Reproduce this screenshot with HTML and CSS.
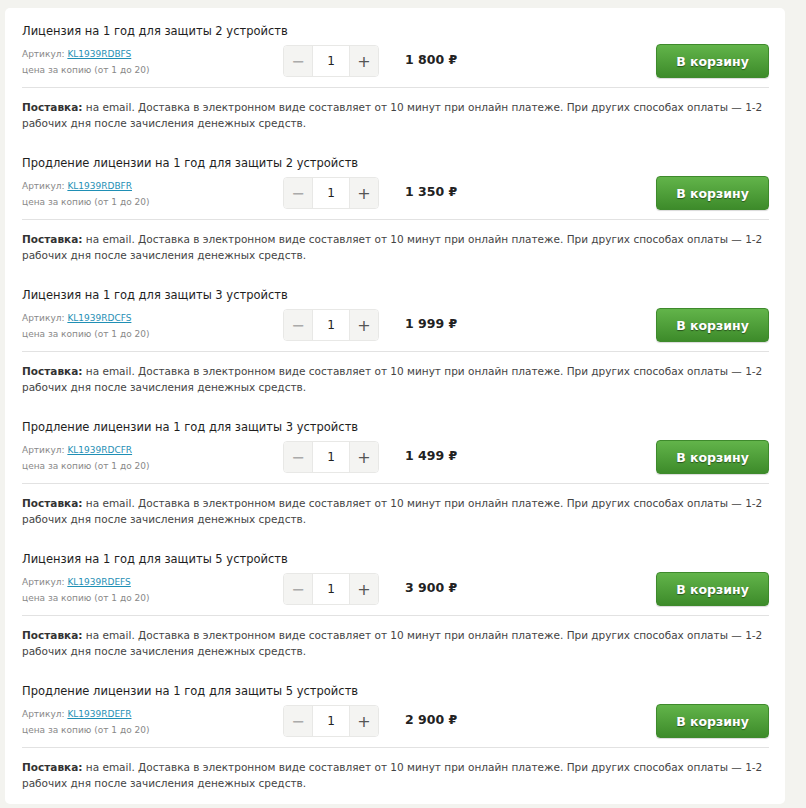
FILE: index.html
```html
<!DOCTYPE html>
<html lang="ru">
<head>
  <meta charset="UTF-8">
  <meta name="viewport" content="width=device-width, initial-scale=1.0">
  <title>Купить лицензию</title>
  <link rel="stylesheet" href="styles.css">
</head>
<body>

  <div class="offers">

    <!-- 2 устройства -->
    <div class="offer">
      <div class="offer-title">Лицензия на 1 год для защиты 2 устройств</div>
      <div class="offer-row">
        <div class="offer-info">
          <div class="sku">Артикул: <a href="#">KL1939RDBFS</a></div>
          <div class="per-copy">цена за копию (от 1 до 20)</div>
        </div>
        <div class="qty">
          <button class="qty-btn">&minus;</button>
          <input class="qty-input" type="text" value="1">
          <button class="qty-btn">+</button>
        </div>
        <div class="price">1 800 ₽</div>
        <button class="cart-btn">В корзину</button>
      </div>
      <p class="delivery"><b>Поставка:</b> на email. Доставка в электронном виде составляет от 10 минут при онлайн платеже. При других способах оплаты — 1-2 рабочих дня после зачисления денежных средств.</p>
    </div>

    <div class="offer">
      <div class="offer-title">Продление лицензии на 1 год для защиты 2 устройств</div>
      <div class="offer-row">
        <div class="offer-info">
          <div class="sku">Артикул: <a href="#">KL1939RDBFR</a></div>
          <div class="per-copy">цена за копию (от 1 до 20)</div>
        </div>
        <div class="qty">
          <button class="qty-btn">&minus;</button>
          <input class="qty-input" type="text" value="1">
          <button class="qty-btn">+</button>
        </div>
        <div class="price">1 350 ₽</div>
        <button class="cart-btn">В корзину</button>
      </div>
      <p class="delivery"><b>Поставка:</b> на email. Доставка в электронном виде составляет от 10 минут при онлайн платеже. При других способах оплаты — 1-2 рабочих дня после зачисления денежных средств.</p>
    </div>

    <!-- 3 устройства -->
    <div class="offer">
      <div class="offer-title">Лицензия на 1 год для защиты 3 устройств</div>
      <div class="offer-row">
        <div class="offer-info">
          <div class="sku">Артикул: <a href="#">KL1939RDCFS</a></div>
          <div class="per-copy">цена за копию (от 1 до 20)</div>
        </div>
        <div class="qty">
          <button class="qty-btn">&minus;</button>
          <input class="qty-input" type="text" value="1">
          <button class="qty-btn">+</button>
        </div>
        <div class="price">1 999 ₽</div>
        <button class="cart-btn">В корзину</button>
      </div>
      <p class="delivery"><b>Поставка:</b> на email. Доставка в электронном виде составляет от 10 минут при онлайн платеже. При других способах оплаты — 1-2 рабочих дня после зачисления денежных средств.</p>
    </div>

    <div class="offer">
      <div class="offer-title">Продление лицензии на 1 год для защиты 3 устройств</div>
      <div class="offer-row">
        <div class="offer-info">
          <div class="sku">Артикул: <a href="#">KL1939RDCFR</a></div>
          <div class="per-copy">цена за копию (от 1 до 20)</div>
        </div>
        <div class="qty">
          <button class="qty-btn">&minus;</button>
          <input class="qty-input" type="text" value="1">
          <button class="qty-btn">+</button>
        </div>
        <div class="price">1 499 ₽</div>
        <button class="cart-btn">В корзину</button>
      </div>
      <p class="delivery"><b>Поставка:</b> на email. Доставка в электронном виде составляет от 10 минут при онлайн платеже. При других способах оплаты — 1-2 рабочих дня после зачисления денежных средств.</p>
    </div>

    <!-- 5 устройств -->
    <div class="offer">
      <div class="offer-title">Лицензия на 1 год для защиты 5 устройств</div>
      <div class="offer-row">
        <div class="offer-info">
          <div class="sku">Артикул: <a href="#">KL1939RDEFS</a></div>
          <div class="per-copy">цена за копию (от 1 до 20)</div>
        </div>
        <div class="qty">
          <button class="qty-btn">&minus;</button>
          <input class="qty-input" type="text" value="1">
          <button class="qty-btn">+</button>
        </div>
        <div class="price">3 900 ₽</div>
        <button class="cart-btn">В корзину</button>
      </div>
      <p class="delivery"><b>Поставка:</b> на email. Доставка в электронном виде составляет от 10 минут при онлайн платеже. При других способах оплаты — 1-2 рабочих дня после зачисления денежных средств.</p>
    </div>

    <div class="offer">
      <div class="offer-title">Продление лицензии на 1 год для защиты 5 устройств</div>
      <div class="offer-row">
        <div class="offer-info">
          <div class="sku">Артикул: <a href="#">KL1939RDEFR</a></div>
          <div class="per-copy">цена за копию (от 1 до 20)</div>
        </div>
        <div class="qty">
          <button class="qty-btn">&minus;</button>
          <input class="qty-input" type="text" value="1">
          <button class="qty-btn">+</button>
        </div>
        <div class="price">2 900 ₽</div>
        <button class="cart-btn">В корзину</button>
      </div>
      <p class="delivery"><b>Поставка:</b> на email. Доставка в электронном виде составляет от 10 минут при онлайн платеже. При других способах оплаты — 1-2 рабочих дня после зачисления денежных средств.</p>
    </div>

  </div>

</body>
</html>
```

FILE: styles.css
```css
/* General */
body {
  font-family: "DejaVu Sans", Verdana, sans-serif;
  background-color: #f3f3ef;
  color: #222;
  margin: 0;
  padding: 8px 0 0 5px;
}

.offers {
  width: 747px;
  background-color: #fff;
  border-radius: 5px;
  padding: 14px 16px 13px 17px;
}

/* Offer row */
.offer + .offer {
  margin-top: 23px;
}

.offer-title {
  font-size: 11.5px;
  line-height: 18px;
  color: #1e1e1e;
}

.offer-row {
  display: flex;
  align-items: center;
  margin-top: 4px;
  padding-bottom: 9px;
  border-bottom: 1px solid #e2e2e2;
}

.offer-info {
  width: 261px;
  font-size: 9px;
  line-height: 16px;
  color: #888;
  padding-top: 2px;
}

.sku a {
  color: #1f8fb5;
}

/* Quantity */
.qty {
  display: flex;
  height: 30px;
  border: 1px solid #e8e8e6;
  border-radius: 4px;
  overflow: hidden;
}

.qty-btn {
  width: 28px;
  border: none;
  background-color: #f4f4f2;
  font-family: "DejaVu Sans", sans-serif;
  font-size: 16px;
  color: #555;
  padding: 0;
  cursor: pointer;
}

.qty-btn:first-child {
  color: #aaa;
}

.qty-btn:last-child {
  width: 29px;
  border-left: 1px solid #e8e8e6;
}

.qty-input {
  width: 36px;
  border: none;
  border-left: 1px solid #e8e8e6;
  text-align: center;
  font-family: "DejaVu Sans", sans-serif;
  font-size: 12px;
  color: #222;
  padding: 0;
}

.price {
  margin-left: 26px;
  font-size: 12.5px;
  font-weight: bold;
  color: #222;
  padding-bottom: 3px;
}

/* Cart button */
.cart-btn {
  margin-left: auto;
  width: 113px;
  height: 34px;
  border: 1px solid #3e8a2c;
  border-radius: 4px;
  background: linear-gradient(#62b44a, #3d8b2a);
  color: #fff;
  font-family: "DejaVu Sans", sans-serif;
  font-size: 12.5px;
  font-weight: bold;
  text-shadow: 0 1px 1px rgba(0, 0, 0, 0.45);
  box-shadow: 0 1px 1px rgba(0, 0, 0, 0.15);
  cursor: pointer;
}

.delivery {
  margin: 0;
  padding-top: 11px;
  font-size: 10.5px;
  line-height: 16px;
  color: #444;
}

.delivery b {
  color: #333;
}
```
